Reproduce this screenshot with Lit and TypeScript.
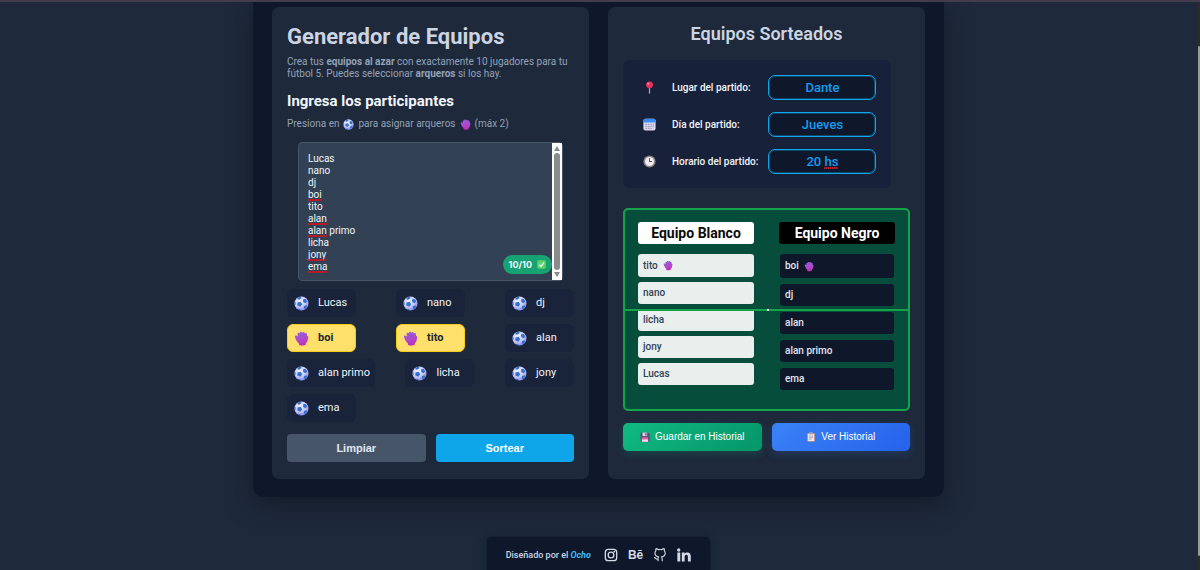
import { LitElement, html, svg, css } from "lit";
import { customElement, property, state } from "lit/decorators.js";
import { classMap } from "lit/directives/class-map.js";

const glyphs: Record<string, unknown> = {
  ball: svg`
    <defs>
      <radialGradient id="b" cx="0.38" cy="0.3" r="0.8">
        <stop offset="0" stop-color="#f3f0ff"/><stop offset="0.55" stop-color="#c9c8f6"/><stop offset="1" stop-color="#7774e2"/>
      </radialGradient>
      <clipPath id="c"><circle cx="16" cy="16" r="15"/></clipPath>
    </defs>
    <circle cx="16" cy="16" r="15" fill="url(#b)"/>
    <g clip-path="url(#c)" fill="#2f72d2">
      <path d="M7.500 14 14 12.500 17.500 17.500 13.500 23 7 20.500z"/>
      <path d="M19 7.500 24 6 28 10.500 25.500 15.500 20 13.500z"/>
      <path d="M8 3 15 1 16 4.500 11 8 7 7z"/>
      <path d="M21.500 21.500 26.500 19.500 28 23 24 28 20.500 26z"/>
      <path d="M0 12 3 12 3.500 18 1 20z"/>
      <path d="M8 27 13 28 16 32 9 31z"/>
    </g>`,
  glove: svg`
    <defs>
      <linearGradient id="g" x1="0.2" y1="0" x2="0.5" y2="1">
        <stop offset="0" stop-color="#9562d6"/><stop offset="0.5" stop-color="#aa4fd0"/><stop offset="1" stop-color="#cb2cb6"/>
      </linearGradient>
    </defs>
    <path fill="url(#g)" d="M2 11.500c0-2.200 3-3 4.600-1L8 12 7.600 6.500C7.500 3.500 11.300 3 12 5.500 11.800 1 17 .6 17.500 4 18.200 1 23 1.300 23 5.200c1.200-2 4.800-1.300 4.700 1.800l.3 4c1.200-.6 2.800.2 2.500 2L29 20c-.5 2.600-2 4.500-4 6l.3 3c-2 2.300-11.800 3.300-14.300 1l-.8-4C6 23 3 17 2 11.500z"/>
    <path fill="none" stroke="#8a45c0" stroke-width="0.900" opacity="0.7" d="M12.200 6l.6 8M17.700 5v9M23 6.500l-.6 8M10.800 26c4 1.500 10 1 14.200-.6"/>`,
  pin: svg`
    <path d="M16 15v15" stroke="#a9a7b8" stroke-width="3" stroke-linecap="round"/>
    <circle cx="16" cy="9.500" r="8.500" fill="#e8305f"/><circle cx="13" cy="6.500" r="2.500" fill="#ff8aa5"/>`,
  calendar: svg`
    <rect x="1" y="2" width="30" height="29" rx="5" fill="#dcd8f0"/>
    <path d="M1 11V7a5 5 0 0 1 5-5h20a5 5 0 0 1 5 5v4z" fill="#3b8bf5"/>
    <g fill="#a09cba"><path d="M6 14h4v3H6zM12 14h4v3h-4zM18 14h4v3h-4zM24 14h3v3h-3zM6 19h4v3H6zM12 19h4v3h-4zM18 19h4v3h-4zM24 19h3v3h-3zM6 24h4v3H6zM12 24h4v3h-4zM18 24h4v3h-4z"/></g>`,
  clock: svg`
    <circle cx="16" cy="16" r="15" fill="#8d8581"/><circle cx="16" cy="16" r="11" fill="#efecf2"/>
    <path d="M16 8v8h6" fill="none" stroke="#4a4453" stroke-width="2.500"/><path d="M16 16v-6" stroke="#e0405c" stroke-width="1.500"/>`,
  disk: svg`
    <path d="M2 2h25l4 4v25H2z" fill="#5c4a78"/><rect x="8" y="2" width="15" height="11" fill="#dcd6e4"/>
    <rect x="17" y="4" width="4" height="7" fill="#4b3c63"/><rect x="6" y="17" width="20" height="14" fill="#e85b9c"/><rect x="6" y="24" width="20" height="7" fill="#eee3f2"/>`,
  board: svg`
    <rect x="3" y="3" width="26" height="28" rx="3" fill="#b98a7c"/><rect x="6" y="6" width="20" height="23" fill="#f0e9f7"/>
    <rect x="10" y="1" width="12" height="7" rx="2" fill="#a9a3b5"/><path d="M9 13h14M9 18h14M9 23h9" stroke="#9189ab" stroke-width="2"/>`,
  check: svg`
    <rect x="1" y="1" width="30" height="30" rx="5" fill="#5fd36b"/><path d="m8 17 6 6L25 9" fill="none" stroke="#fff" stroke-width="4"/>`,
  instagram: svg`
    <g fill="none" stroke="#d3dae6" stroke-width="3"><rect x="3" y="3" width="26" height="26" rx="7"/><circle cx="16" cy="16" r="6.500"/></g>
    <circle cx="23.500" cy="8.500" r="2" fill="#d3dae6"/>`,
  github: svg`
    <path fill="none" stroke="#d3dae6" stroke-width="2.600" stroke-linecap="round" stroke-linejoin="round" d="M11.500 29v-5c0-1.800.5-2.800 1.500-3.800-5-.6-8.500-2.900-8.500-8.700 0-2 .7-3.700 2-5-.3-1.600-.2-3.300.4-5 2 .2 3.800 1 5.300 2.300 2.600-.6 5.400-.6 8 0C21.700 2.500 23.500 1.700 25.500 1.500c.6 1.700.7 3.400.4 5 1.300 1.300 2 3 2 5 0 5.800-3.500 8.100-8.500 8.700 1 1 1.500 2 1.500 3.800v5M11.500 25.500c-5 1.500-5-2.500-8-3.500"/>`,
  linkedin: svg`
    <g fill="#d3dae6"><circle cx="4" cy="4.500" r="3.800"/><path d="M.8 10.500h6.600V31H.8zM11 10.500h6.300v2.800c1.300-2.200 3.400-3.300 6.200-3.300 5.600 0 8 3.200 8 9.200V31h-6.600V20.300c0-3-1-4.700-3.400-4.700-2.700 0-4 1.800-4 5V31H11z"/></g>`,
};

@customElement("ui-glyph")
class UiGlyph extends LitElement {
  @property() name = "ball";
  static styles = css`
    :host { display: inline-block; flex: none; width: 12px; height: 12px; }
    .art { display: block; width: 100%; height: 100%; }
  `;
  render() {
    return html`<svg class="art" viewBox="0 0 32 32" aria-hidden="true">${glyphs[this.name]}</svg>`;
  }
}

@customElement("app-root")
class AppRoot extends LitElement {
  @state() private names = ["Lucas", "nano", "dj", "boi", "tito", "alan", "alan primo", "licha", "jony", "ema"];
  @state() private keepers = ["boi", "tito"];
  private marks = [0, 0, 0, 14, 0, 19, 19, 0, 18, 19];
  private white = ["tito", "nano", "licha", "jony", "Lucas"];
  private black = ["boi", "dj", "alan", "alan primo", "ema"];
  private details = [
    { id: "place", icon: "pin", label: "Lugar del partido:", value: "Dante" },
    { id: "day", icon: "calendar", label: "Día del partido:", value: "Jueves" },
    { id: "hour", icon: "clock", label: "Horario del partido:", value: "20 hs" },
  ];

  static styles = css`
    :host {
      display: grid;
      grid-template-columns: minmax(0, 1fr) 3px;
      height: 100vh;
      overflow: hidden;
      box-sizing: border-box;
      border-top: 2px solid #453b4e;
      background: #1e293b;
      color: #f1f5f9;
      font-family: Roboto, sans-serif;
      font-size: 10px;
      line-height: 12px;
    }
    *, *::before, *::after { box-sizing: border-box; }
    h1, h2, h3, p, ul { margin: 0; padding: 0; }
    ul { list-style: none; }
    .page { display: flex; flex-direction: column; align-items: center; }
    .rail { background: #2b2a29; padding: 44px 0 20px 1px; }
    .thumb { height: 100%; border-radius: 2px; background: #9b9b9b; }
    .board {
      display: grid;
      grid-template-columns: repeat(2, minmax(0, 1fr));
      gap: 19px;
      width: 100%;
      max-width: 691px;
      padding: 5px 19px 18px;
      background: #0f172a;
      border-radius: 0 0 10px 10px;
      box-shadow: 0 8px 24px rgba(15, 20, 28, 0.6);
    }
    .card { padding: 16px 15px 17px; background: #1e293b; border-radius: 7px; }
    .title { margin-top: 1px; font-size: 22px; line-height: 26px; font-weight: 700; color: #cbd5e1; }
    .lead { margin-top: 6px; color: #94a3b8; }
    .sub { margin-top: 11px; font-size: 15px; line-height: 20px; font-weight: 700; }
    .hint { display: flex; align-items: center; gap: 4px; margin-top: 6px; line-height: 14px; color: #94a3b8; }
    .inline { width: 11px; height: 11px; }
    .entry {
      position: relative;
      display: flex;
      margin: 11px 11px 0;
      border: 1px solid #475569;
      border-radius: 4px;
      background: #334155;
    }
    .names {
      flex: 1;
      min-width: 0;
      display: block;
      padding: 10px 9px 7px;
      border: 0;
      background: none;
      color: #f1f5f9;
      font: 400 10px/12px Roboto, sans-serif;
      resize: none;
      overflow: hidden;
      outline: none;
    }
    .marks { position: absolute; left: 9px; top: 10px; pointer-events: none; }
    .mark { height: 12px; display: flex; align-items: flex-end; }
    .squiggle {
      height: 2px;
      background: repeating-linear-gradient(90deg, #b5202f 0 1px, rgba(181, 32, 47, 0.55) 1px 2px);
    }
    .scroll {
      width: 10px;
      display: flex;
      flex-direction: column;
      align-items: center;
      gap: 2px;
      padding: 3px 0;
      background: #fcfcfc;
    }
    .up, .down { border: 3px solid transparent; }
    .up { border-top: 0; border-bottom: 5px solid #8b8b8b; }
    .down { border-bottom: 0; border-top: 5px solid #8b8b8b; }
    .grip { flex: 1; width: 6px; border-radius: 3px; background: #8b8b8b; }
    .count {
      position: absolute;
      right: 10px;
      bottom: 6px;
      display: flex;
      align-items: center;
      gap: 5px;
      height: 19px;
      padding: 0 6px;
      border-radius: 10px;
      background: #16a273;
      font: 700 9px/19px Inter, sans-serif;
    }
    .tick { width: 9px; height: 9px; }
    .players { display: flex; flex-wrap: wrap; justify-content: space-between; gap: 7px 10px; margin-top: 8px; }
    .players::after { content: ""; flex: 1; }
    .player {
      display: flex;
      align-items: center;
      gap: 9px;
      min-width: 69px;
      height: 28px;
      padding: 0 4px 0 6px;
      border: 1px solid transparent;
      border-radius: 6px;
      background: #19233a;
      color: #f1f5f9;
      font: 400 11px/14px Roboto, sans-serif;
      text-align: left;
    }
    .player ui-glyph { width: 15px; height: 15px; }
    .keeper { border-color: #facc15; background: #fee06a; color: #1f2430; font-weight: 700; }
    .actions { display: grid; grid-template-columns: 1fr 1fr; gap: 10px; margin-top: 12px; }
    .btn {
      display: flex;
      align-items: center;
      justify-content: center;
      gap: 5px;
      height: 28px;
      padding: 0;
      border: 0;
      border-radius: 4px;
      color: #fff;
      font: 700 11px/14px "Liberation Sans", sans-serif;
    }
    .clear { background: #475569; color: #e2e8f0; }
    .draw { background: #0ea5e9; }
    .save, .history { border-radius: 5px; font-size: 10px; font-weight: 400; }
    .save { background: linear-gradient(135deg, #10b981, #059669); box-shadow: 0 3px 9px rgba(16, 185, 129, 0.2); }
    .history { background: linear-gradient(135deg, #3b82f6, #2563eb); box-shadow: 0 3px 9px rgba(59, 130, 246, 0.2); }
    .btn ui-glyph { width: 10px; height: 10px; }
    .heading { font-size: 18px; line-height: 22px; font-weight: 600; text-align: center; color: #cbd5e1; }
    .match {
      display: grid;
      gap: 12px;
      margin: 15px 19px 0 0;
      padding: 15px 15px 14px 20px;
      border-radius: 6px;
      background: #18213a;
    }
    .detail { display: grid; grid-template-columns: 13px 1fr 108px; align-items: center; column-gap: 10px; }
    .detail ui-glyph { width: 13px; height: 13px; }
    .label { padding-left: 6px; font-weight: 500; white-space: nowrap; }
    .field { position: relative; display: flex; }
    .value {
      width: 100%;
      height: 25px;
      padding: 0;
      border: 1px solid #0ea5e9;
      box-shadow: inset 0 0 0 1px rgba(14, 165, 233, 0.35);
      border-radius: 7px;
      background: #0f172a;
      color: #149cf0;
      font: 500 13px/16px Roboto, sans-serif;
      text-align: center;
      outline: none;
    }
    .typo { position: absolute; left: 56px; bottom: 5px; width: 14px; }
    .pitch {
      position: relative;
      display: grid;
      grid-template-columns: 1fr 1fr;
      gap: 25px;
      margin-top: 20px;
      padding: 12px 13px 19px;
      border: 2px solid #16a34a;
      border-radius: 5px;
      background: #064e3b;
    }
    .pitch::before, .pitch::after { content: ""; position: absolute; top: 50%; height: 2px; margin-top: -1px; }
    .pitch::before { left: 0; right: 0; background: #16a34a; }
    .pitch::after { left: 50%; width: 2px; background: #fff; }
    .team { height: 22px; border-radius: 3px; font-size: 14px; line-height: 22px; font-weight: 700; text-align: center; }
    .list { display: grid; margin-top: 10px; }
    .mate { display: flex; align-items: center; gap: 5px; height: 22px; padding: 0 5px; border-radius: 3px; font-weight: 500; }
    .goalie { height: 23px; }
    .light .team { background: #fff; color: #0b0b0b; }
    .light .list { gap: 5px; }
    .light .mate { background: #e8efed; color: #334155; }
    .dark .team { background: #000; color: #fff; }
    .dark .list { gap: 6px; padding: 0 1px; }
    .dark .goalie { height: 24px; }
    .dark .mate { background: #0f172a; color: #e2e8f0; }
    .mate ui-glyph { width: 10px; height: 11px; }
    .credits {
      display: flex;
      align-items: center;
      gap: 13px;
      height: 40px;
      margin-top: 39px;
      padding: 0 19px 3px;
      border: 1px solid #162036;
      border-radius: 6px 6px 0 0;
      background: #0f172a;
      color: #cbd5e1;
      font-size: 9px;
      font-weight: 500;
      box-shadow: 0 0 8px rgba(15, 23, 42, 0.4);
    }
    .author { color: #38bdf8; font-style: italic; font-weight: 700; text-decoration: none; }
    .social { display: flex; align-items: center; gap: 10px; }
    .link { display: flex; color: #d3dae6; font: 700 12px/14px "Liberation Sans", sans-serif; text-decoration: none; }
    .link ui-glyph { width: 14px; height: 14px; }
  `;

  private toggle(name: string) {
    if (this.keepers.includes(name)) this.keepers = this.keepers.filter((k) => k !== name);
    else if (this.keepers.length < 2) this.keepers = [...this.keepers, name];
  }

  private team(title: string, tone: string, members: string[]) {
    return html`<section class="side ${tone}">
      <h3 class="team">${title}</h3>
      <ul class="list">
        ${members.map((m, i) => html`<li class=${classMap({ mate: true, goalie: i === 0 })}>${m}${i === 0 ? html`<ui-glyph name="glove"></ui-glyph>` : null}</li>`)}
      </ul>
    </section>`;
  }

  render() {
    return html`
      <div class="page">
        <main class="board">
          <section class="card">
            <h1 class="title">Generador de Equipos</h1>
            <p class="lead">Crea tus <b>equipos al azar</b> con exactamente 10 jugadores para tu fútbol 5. Puedes seleccionar <b>arqueros</b> si los hay.</p>
            <h2 class="sub">Ingresa los participantes</h2>
            <p class="hint">Presiona en <ui-glyph class="inline" name="ball"></ui-glyph> para asignar arqueros <ui-glyph class="inline" name="glove"></ui-glyph> (máx 2)</p>
            <div class="entry">
              <textarea class="names" rows="10" spellcheck="false" aria-label="Participantes" .value=${this.names.join("\n")}></textarea>
              <div class="marks" aria-hidden="true">
                ${this.marks.map((w) => html`<div class="mark"><div class="squiggle" style="width:${w}px"></div></div>`)}
              </div>
              <div class="scroll" aria-hidden="true"><i class="up"></i><i class="grip"></i><i class="down"></i></div>
              <span class="count">${this.names.length}/10 <ui-glyph class="tick" name="check"></ui-glyph></span>
            </div>
            <div class="players">
              ${this.names.map((n) => {
                const keeper = this.keepers.includes(n);
                return html`<button class=${classMap({ player: true, keeper })} @click=${() => this.toggle(n)}>
                  <ui-glyph name=${keeper ? "glove" : "ball"}></ui-glyph>${n}
                </button>`;
              })}
            </div>
            <div class="actions">
              <button class="btn clear">Limpiar</button>
              <button class="btn draw">Sortear</button>
            </div>
          </section>

          <section class="card">
            <h2 class="heading">Equipos Sorteados</h2>
            <div class="match">
              ${this.details.map((d) => html`<div class="detail">
                <ui-glyph name=${d.icon}></ui-glyph>
                <label class="label" for=${d.id}>${d.label}</label>
                <div class="field">
                  <input class="value" id=${d.id} spellcheck="false" .value=${d.value} />
                  ${d.id === "hour" ? html`<i class="squiggle typo"></i>` : null}
                </div>
              </div>`)}
            </div>
            <div class="pitch">
              ${this.team("Equipo Blanco", "light", this.white)}
              ${this.team("Equipo Negro", "dark", this.black)}
            </div>
            <div class="actions">
              <button class="btn save"><ui-glyph name="disk"></ui-glyph>Guardar en Historial</button>
              <button class="btn history"><ui-glyph name="board"></ui-glyph>Ver Historial</button>
            </div>
          </section>
        </main>
        <footer class="credits">
          <span>Diseñado por el <a class="author" href="#ocho">Ocho</a></span>
          <nav class="social">
            <a class="link" href="#instagram" aria-label="Instagram"><ui-glyph name="instagram"></ui-glyph></a>
            <a class="link" href="#behance" aria-label="Behance">Bē</a>
            <a class="link" href="#github" aria-label="GitHub"><ui-glyph name="github"></ui-glyph></a>
            <a class="link" href="#linkedin" aria-label="LinkedIn"><ui-glyph name="linkedin"></ui-glyph></a>
          </nav>
        </footer>
      </div>
      <div class="rail" aria-hidden="true"><div class="thumb"></div></div>
    `;
  }
}
